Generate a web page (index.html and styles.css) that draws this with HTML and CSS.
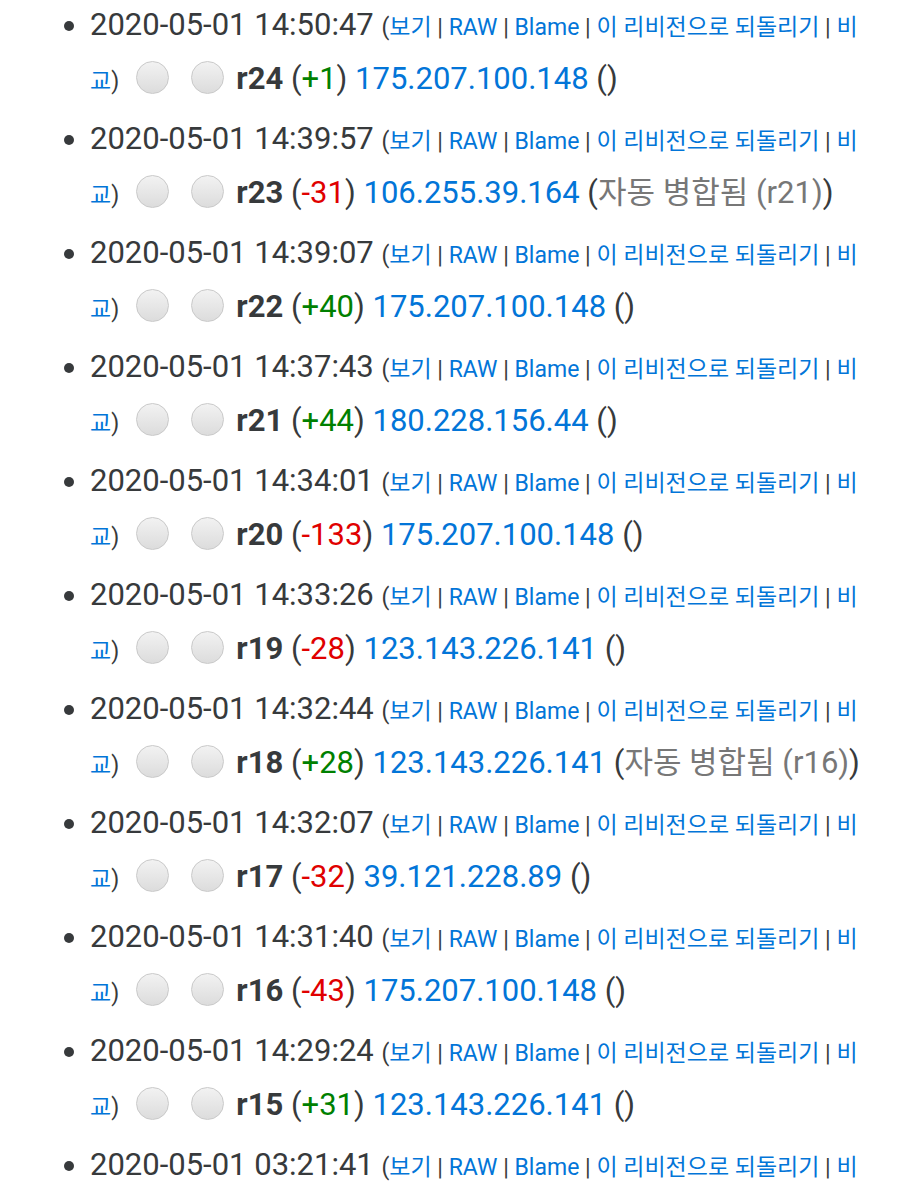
FILE: index.html
```html
<!DOCTYPE html>
<html lang="ko">
<head>
    <meta charset="UTF-8">
    <title>역사</title>
    <link rel="stylesheet" href="styles.css">
</head>
<body>
    <ul class="history">
        <li>
            2020-05-01 14:50:47 <span class="tools">(<a href="#">보기</a> | <a href="#">RAW</a> | <a href="#">Blame</a> | <a href="#">이 리비전으로 되돌리기</a> | <a href="#">비교</a>)</span>
            <input type="radio" name="oldrev"> <input type="radio" name="rev">
            <strong>r24</strong> (<span class="plus">+1</span>) <a href="#">175.207.100.148</a> ()
        </li>
        <li>
            2020-05-01 14:39:57 <span class="tools">(<a href="#">보기</a> | <a href="#">RAW</a> | <a href="#">Blame</a> | <a href="#">이 리비전으로 되돌리기</a> | <a href="#">비교</a>)</span>
            <input type="radio" name="oldrev"> <input type="radio" name="rev">
            <strong>r23</strong> (<span class="minus">-31</span>) <a href="#">106.255.39.164</a> (<i class="log">자동 병합됨 (r21)</i>)
        </li>
        <li>
            2020-05-01 14:39:07 <span class="tools">(<a href="#">보기</a> | <a href="#">RAW</a> | <a href="#">Blame</a> | <a href="#">이 리비전으로 되돌리기</a> | <a href="#">비교</a>)</span>
            <input type="radio" name="oldrev"> <input type="radio" name="rev">
            <strong>r22</strong> (<span class="plus">+40</span>) <a href="#">175.207.100.148</a> ()
        </li>
        <li>
            2020-05-01 14:37:43 <span class="tools">(<a href="#">보기</a> | <a href="#">RAW</a> | <a href="#">Blame</a> | <a href="#">이 리비전으로 되돌리기</a> | <a href="#">비교</a>)</span>
            <input type="radio" name="oldrev"> <input type="radio" name="rev">
            <strong>r21</strong> (<span class="plus">+44</span>) <a href="#">180.228.156.44</a> ()
        </li>
        <li>
            2020-05-01 14:34:01 <span class="tools">(<a href="#">보기</a> | <a href="#">RAW</a> | <a href="#">Blame</a> | <a href="#">이 리비전으로 되돌리기</a> | <a href="#">비교</a>)</span>
            <input type="radio" name="oldrev"> <input type="radio" name="rev">
            <strong>r20</strong> (<span class="minus">-133</span>) <a href="#">175.207.100.148</a> ()
        </li>
        <li>
            2020-05-01 14:33:26 <span class="tools">(<a href="#">보기</a> | <a href="#">RAW</a> | <a href="#">Blame</a> | <a href="#">이 리비전으로 되돌리기</a> | <a href="#">비교</a>)</span>
            <input type="radio" name="oldrev"> <input type="radio" name="rev">
            <strong>r19</strong> (<span class="minus">-28</span>) <a href="#">123.143.226.141</a> ()
        </li>
        <li>
            2020-05-01 14:32:44 <span class="tools">(<a href="#">보기</a> | <a href="#">RAW</a> | <a href="#">Blame</a> | <a href="#">이 리비전으로 되돌리기</a> | <a href="#">비교</a>)</span>
            <input type="radio" name="oldrev"> <input type="radio" name="rev">
            <strong>r18</strong> (<span class="plus">+28</span>) <a href="#">123.143.226.141</a> (<i class="log">자동 병합됨 (r16)</i>)
        </li>
        <li>
            2020-05-01 14:32:07 <span class="tools">(<a href="#">보기</a> | <a href="#">RAW</a> | <a href="#">Blame</a> | <a href="#">이 리비전으로 되돌리기</a> | <a href="#">비교</a>)</span>
            <input type="radio" name="oldrev"> <input type="radio" name="rev">
            <strong>r17</strong> (<span class="minus">-32</span>) <a href="#">39.121.228.89</a> ()
        </li>
        <li>
            2020-05-01 14:31:40 <span class="tools">(<a href="#">보기</a> | <a href="#">RAW</a> | <a href="#">Blame</a> | <a href="#">이 리비전으로 되돌리기</a> | <a href="#">비교</a>)</span>
            <input type="radio" name="oldrev"> <input type="radio" name="rev">
            <strong>r16</strong> (<span class="minus">-43</span>) <a href="#">175.207.100.148</a> ()
        </li>
        <li>
            2020-05-01 14:29:24 <span class="tools">(<a href="#">보기</a> | <a href="#">RAW</a> | <a href="#">Blame</a> | <a href="#">이 리비전으로 되돌리기</a> | <a href="#">비교</a>)</span>
            <input type="radio" name="oldrev"> <input type="radio" name="rev">
            <strong>r15</strong> (<span class="plus">+31</span>) <a href="#">123.143.226.141</a> ()
        </li>
        <li>
            2020-05-01 03:21:41 <span class="tools">(<a href="#">보기</a> | <a href="#">RAW</a> | <a href="#">Blame</a> | <a href="#">이 리비전으로 되돌리기</a> | <a href="#">비교</a>)</span>
            <input type="radio" name="oldrev"> <input type="radio" name="rev">
            <strong>r14</strong> (<span class="plus">+12</span>) <a href="#">123.143.226.141</a> ()
        </li>
    </ul>
</body>
</html>
```

FILE: styles.css
```css
body {
    margin: 0;
    background-color: #fff;
    color: #373a3c;
    font-family: Roboto, "Noto Sans CJK KR", sans-serif;
    font-size: 31px;
}
.history {
    margin: -2px 0 0 0;
    padding: 0 30px 0 90px;
    line-height: 54px;
}
.history li {
    margin-bottom: 6px;
}
a {
    color: #0275d8;
    text-decoration: none;
}
.tools {
    font-size: 23px;
    line-height: 1;
}
strong {
    font-weight: bold;
}
.plus {
    color: #008000;
}
.minus {
    color: #e00000;
}
.log {
    font-style: normal;
    color: #777;
}
input[type="radio"] {
    -webkit-appearance: none;
    appearance: none;
    width: 33px;
    height: 33px;
    margin: 0 5px 0 9px;
    border: 1px solid #c9c9c9;
    border-radius: 50%;
    background: linear-gradient(#f2f2f2, #dcdcdc);
    vertical-align: -5px;
}
```
